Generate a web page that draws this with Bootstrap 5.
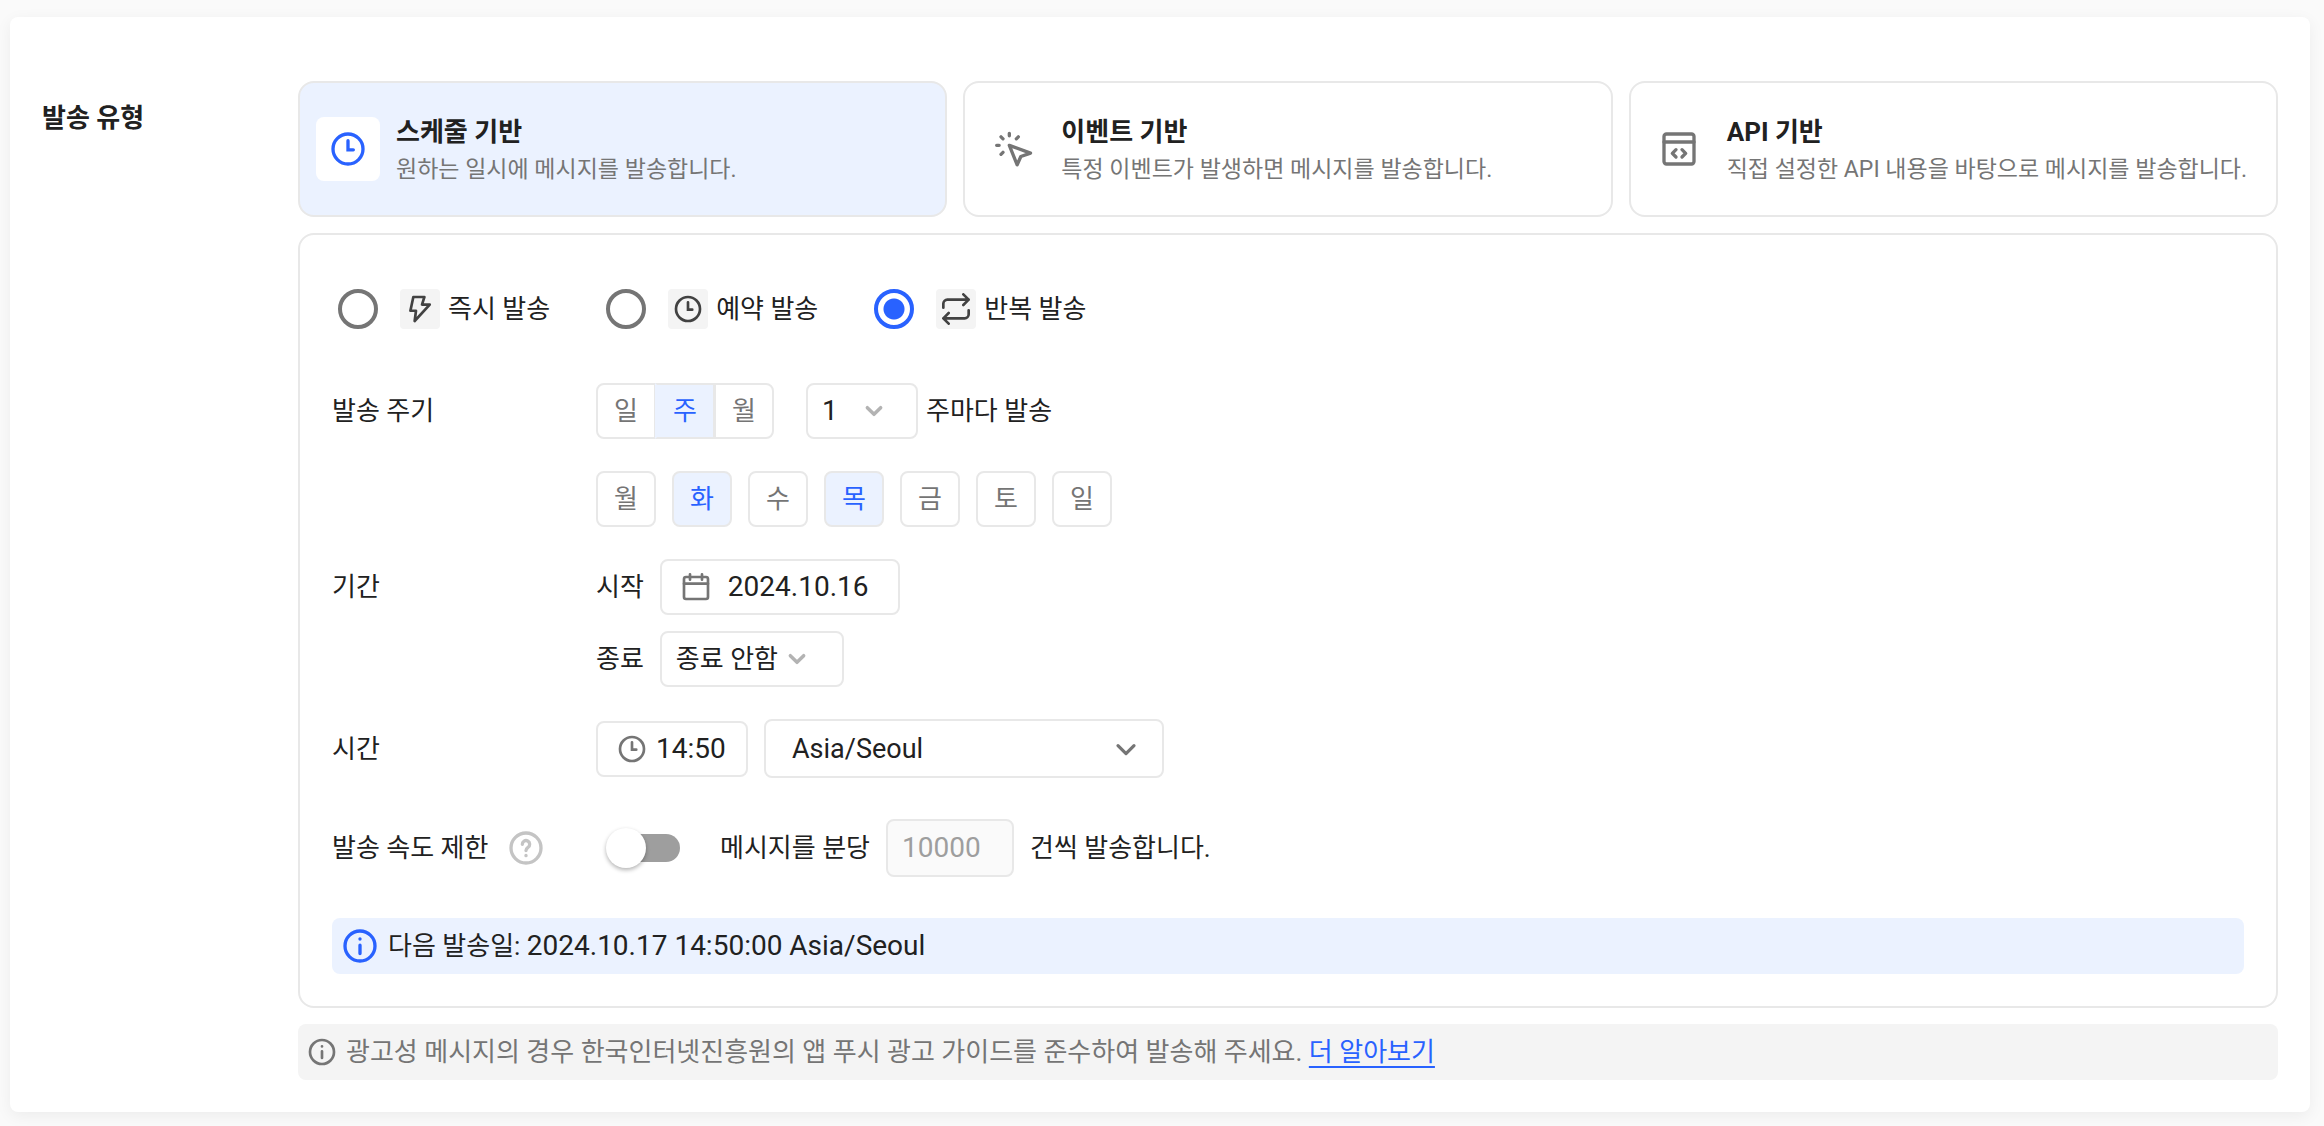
<!DOCTYPE html>
<html lang="ko">
<head>
<meta charset="utf-8">
<meta name="viewport" content="width=device-width, initial-scale=1">
<title>발송 유형</title>
<link rel="stylesheet" href="https://cdn.jsdelivr.net/npm/bootstrap@5.3.0/dist/css/bootstrap.min.css">
<style>
:root{--line:#e8e8e8;--blue:#2962ff;--tint:#ebf2ff;--ink:#212121;--muted:#757575}
body{background:#fafafa;color:var(--ink);font-family:Roboto,"Noto Sans CJK KR",sans-serif;font-size:26px;line-height:40px}
svg{display:block;flex:none;fill:none;stroke:currentColor;stroke-width:2;stroke-linecap:round;stroke-linejoin:round}
.page{padding:17px 14px 14px 10px}
.sheet{background:#fff;border-radius:8px;padding:64px 32px 32px;box-shadow:0 4px 16px rgba(0,0,0,.06)}
.side{width:256px;padding-top:17px;font-size:26px;line-height:40px;font-weight:700}
.stack{gap:16px;min-width:0}
.kinds{display:grid;grid-template-columns:repeat(3,1fr);gap:16px}
.kind{height:136px;padding:0 16px;gap:16px;border:2px solid var(--line);border-radius:16px;background:#fff;text-align:left;color:var(--ink)}
.kind.active{background:var(--tint)}
.kind .tile{width:64px;height:64px;border-radius:8px;color:var(--muted)}
.kind.active .tile{background:#fff;color:var(--blue)}
.kind .words{padding-top:2px}
.kind strong{display:block;line-height:40px}
.kind .desc{display:block;font-size:23px;line-height:36px;color:var(--muted)}
.panel{border:2px solid var(--line);border-radius:16px;padding:32px;gap:32px}
.modes{height:84px;padding-left:6px;gap:56px}
.modes label{gap:8px}
.modes .form-check-input{width:40px;height:40px;margin:0 14px 0 0;border:4px solid #757575;background:#fff;box-shadow:none}
.modes .form-check-input:checked{border-color:var(--blue);background:radial-gradient(circle,var(--blue) 0 10px,#fff 11px)}
.chip{width:40px;height:40px;border-radius:4px;background:#f4f4f4;color:#424242}
.name{width:264px;flex:none}
.box{height:56px;border:2px solid var(--line);border-radius:8px;background:#fff;color:var(--ink)}
.box input,.box select{border:0;background:none;padding:0;color:inherit;font-size:28px;line-height:40px;outline:0;appearance:none;min-width:0}
.box select.ko{font-size:26px}
.box select.place{font-size:27px}
.pick{width:60px;height:56px;padding:0;border:2px solid var(--line);border-radius:8px;background:#fff;color:var(--muted);font-size:26px}
.pick.active,.btn-check:checked+.pick{background:var(--tint);color:var(--blue);border-color:var(--line)}
.btn-group>.pick:not(:first-of-type){margin-left:-2px}
.btn-check:checked+.pick.mid{border-left-color:var(--tint)}
.every{width:112px;padding:0 16px 0 14px;margin-left:32px}
.every select{width:36px}
.date{width:240px;padding:0 16px 0 18px}
.until{width:184px;padding:0 14px;gap:2px}
.clock{width:152px;padding:0 16px 0 18px}
.zone{width:400px;height:59px;padding:0 20px 0 26px}
.pale{color:#b3b3b3}.grey{color:var(--muted)}
.help{color:#c4c4c4;margin-left:18px}
.speed{height:76px}
.switch.form-check-input{width:68px;height:28px;margin:0 40px 0 16px;border:0;background:#9e9e9e;position:relative;border-radius:14px;box-shadow:none}
.switch::before{content:"";position:absolute;left:-6px;top:-6px;width:40px;height:40px;border-radius:50%;background:#fff;box-shadow:0 2px 4px rgba(0,0,0,.3)}
.rate{width:128px;height:58px;background:#fafafa;color:#9e9e9e;padding:0 14px}
.num{font-size:28px}
.bar{height:56px;border-radius:8px}
.next{background:var(--tint);padding:0 8px;gap:8px}
.notice{background:#f4f4f4;padding:0 8px;gap:8px;color:var(--muted)}
.notice a{color:var(--blue);text-underline-offset:5px;text-decoration-thickness:2px}
</style>
</head>
<body>
<svg width="0" height="0" class="position-absolute" aria-hidden="true">
<symbol id="i-clock" viewBox="0 0 24 24"><circle cx="12" cy="12" r="9"/><path d="M12 7v5.500h3.200" stroke-linejoin="miter"/></symbol>
<symbol id="i-down" viewBox="0 0 24 24"><path d="M6 9.500l6 6 6-6" stroke-width="2.400"/></symbol>
<symbol id="i-down-small" viewBox="0 0 24 24"><path d="M7 9.500l5 5 5-5" stroke-width="2.600"/></symbol>
<symbol id="i-info" viewBox="0 0 24 24"><circle cx="12" cy="12" r="9"/><path d="M12 11.500v5M12 7.700v.1"/></symbol>
</svg>
<main class="page">
<section class="sheet d-flex">
<h1 class="side flex-shrink-0 m-0">발송 유형</h1>
<div class="stack d-flex flex-column flex-grow-1">
<div class="kinds">
<button type="button" class="kind active d-flex align-items-center"><span class="tile d-flex align-items-center justify-content-center flex-shrink-0"><svg width="40" height="40"><use href="#i-clock"/></svg></span><span class="words"><strong>스케줄 기반</strong><span class="desc">원하는 일시에 메시지를 발송합니다.</span></span></button>
<button type="button" class="kind d-flex align-items-center"><span class="tile d-flex align-items-center justify-content-center flex-shrink-0"><svg width="40" height="40" viewBox="0 0 24 24"><path d="M9.800 9.800l12.700 4.700-5.800 2-2.200 5z"/><path d="M9.800 2.600v1.500M4.800 4.700l1.200 1.200M15.200 4.700L14 5.900M2.200 9.800h1.500M6 14l-1.200 1.200"/></svg></span><span class="words"><strong>이벤트 기반</strong><span class="desc">특정 이벤트가 발생하면 메시지를 발송합니다.</span></span></button>
<button type="button" class="kind d-flex align-items-center"><span class="tile d-flex align-items-center justify-content-center flex-shrink-0"><svg width="40" height="40" viewBox="0 0 24 24"><rect x="3" y="3" width="18" height="18" rx="1.500"/><path d="M3 7.800h18"/><path d="M10.200 12.400L8 14.600l2.200 2.200M13.800 12.400l2.200 2.200-2.200 2.200"/></svg></span><span class="words"><strong>API 기반</strong><span class="desc">직접 설정한 API 내용을 바탕으로 메시지를 발송합니다.</span></span></button>
</div>
<form class="panel d-flex flex-column">
<div class="modes d-flex align-items-center">
<label class="d-flex align-items-center"><input class="form-check-input" type="radio" name="mode"><span class="chip d-flex align-items-center justify-content-center"><svg width="32" height="32" viewBox="0 0 24 24"><path d="M7 3h8.300l-1.800 5.700h5.800L8 21l1-7.700H4.800z"/></svg></span>즉시 발송</label>
<label class="d-flex align-items-center"><input class="form-check-input" type="radio" name="mode"><span class="chip d-flex align-items-center justify-content-center"><svg width="32" height="32"><use href="#i-clock"/></svg></span>예약 발송</label>
<label class="d-flex align-items-center"><input class="form-check-input" type="radio" name="mode" checked><span class="chip d-flex align-items-center justify-content-center"><svg width="32" height="32" viewBox="0 0 24 24"><path d="M2.500 11V8a3 3 0 0 1 3-3h16M17.500 1l4 4-4 4M21.500 13v3a3 3 0 0 1-3 3h-16M6.500 15l-4 4 4 4"/></svg></span>반복 발송</label>
</div>
<div class="d-flex align-items-center">
<span class="name">발송 주기</span>
<div class="btn-group" role="group" aria-label="발송 주기">
<input type="radio" class="btn-check" name="unit" id="u1"><label class="btn pick" for="u1"><span class="d-flex h-100 align-items-center justify-content-center">일</span></label>
<input type="radio" class="btn-check" name="unit" id="u2" checked><label class="btn pick mid" for="u2"><span class="d-flex h-100 align-items-center justify-content-center">주</span></label>
<input type="radio" class="btn-check" name="unit" id="u3"><label class="btn pick" for="u3"><span class="d-flex h-100 align-items-center justify-content-center">월</span></label>
</div>
<div class="box every d-flex align-items-center"><select id="every" aria-label="주기 간격"><option>1</option></select><svg class="pale" width="32" height="32"><use href="#i-down-small"/></svg></div>
<label class="ms-2" for="every">주마다 발송</label>
</div>
<div class="d-flex align-items-center">
<span class="name"></span>
<div class="d-flex gap-3">
<button type="button" class="btn pick">월</button><button type="button" class="btn pick active">화</button><button type="button" class="btn pick">수</button><button type="button" class="btn pick active">목</button><button type="button" class="btn pick">금</button><button type="button" class="btn pick">토</button><button type="button" class="btn pick">일</button>
</div>
</div>
<div class="d-flex">
<span class="name pt-2">기간</span>
<div class="d-flex flex-column gap-3">
<div class="d-flex align-items-center gap-3"><label for="from">시작</label><div class="box date d-flex align-items-center"><svg class="grey" width="32" height="32" viewBox="0 0 24 24"><rect x="3" y="4.500" width="18" height="16.500" rx="1.500"/><path d="M3 9.500h18M7.500 2.500v4M16.500 2.500v4"/></svg><input id="from" class="w-100 ms-3" type="text" value="2024.10.16"></div></div>
<div class="d-flex align-items-center gap-3"><label for="until">종료</label><div class="box until d-flex align-items-center"><select id="until" class="ko"><option>종료 안함</option></select><svg class="pale" width="32" height="32"><use href="#i-down-small"/></svg></div></div>
</div>
</div>
<div class="d-flex align-items-center">
<label class="name" for="time">시간</label>
<div class="box clock d-flex align-items-center me-3"><svg class="grey" width="32" height="32"><use href="#i-clock"/></svg><input id="time" class="w-100 ms-2" type="text" value="14:50"></div>
<div class="box zone d-flex align-items-center"><select class="place flex-grow-1" aria-label="시간대"><option>Asia/Seoul</option></select><svg class="grey" width="32" height="32"><use href="#i-down"/></svg></div>
</div>
<div class="speed d-flex align-items-center">
<label class="name d-flex align-items-center" for="limit">발송 속도 제한<svg class="help" width="40" height="40" viewBox="0 0 24 24"><circle cx="12" cy="12" r="9"/><path d="M9.800 9.800a2.200 2.200 0 1 1 3.400 1.800c-.8.600-1.200 1-1.200 1.900M12 16.500v.1"/></svg></label>
<input id="limit" class="form-check-input switch" type="checkbox" role="switch">
<label for="rate">메시지를 분당</label>
<div class="box rate d-flex align-items-center mx-3"><input id="rate" class="w-100" type="text" value="10000" disabled></div>
<span>건씩 발송합니다.</span>
</div>
<div class="bar next d-flex align-items-center"><svg width="40" height="40" color="#2962ff"><use href="#i-info"/></svg><span>다음 발송일: <span class="num">2024.10.17 14:50:00 Asia/Seoul</span></span></div>
</form>
<div class="bar notice d-flex align-items-center"><svg width="32" height="32"><use href="#i-info"/></svg><span>광고성 메시지의 경우 한국인터넷진흥원의 앱 푸시 광고 가이드를 준수하여 발송해 주세요. <a href="#">더 알아보기</a></span></div>
</div>
</section>
</main>
<script src="https://cdn.jsdelivr.net/npm/bootstrap@5.3.0/dist/js/bootstrap.bundle.min.js"></script>
</body>
</html>
